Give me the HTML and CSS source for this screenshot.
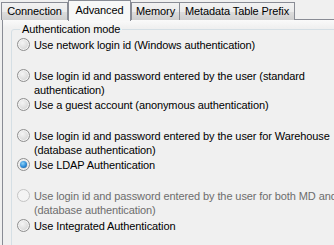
FILE: index.html
```html
<!DOCTYPE html>
<html>
<head>
<meta charset="utf-8">
<link rel="stylesheet" href="styles.css">
</head>
<body>
<div class="window">
  <div class="tabs">
    <div class="tab tab-conn">Connection</div>
    <div class="tab tab-adv active">Advanced</div>
    <div class="tab tab-mem">Memory</div>
    <div class="tab tab-meta">Metadata Table Prefix</div>
  </div>
  <div class="panel">
    <fieldset class="group">
      <legend>Authentication mode</legend>
      <div class="opt o1"><span class="radio"></span><span class="lbl">Use network login id (Windows authentication)</span></div>
      <div class="opt o2"><span class="radio"></span><span class="lbl">Use login id and password entered by the user (standard<br>authentication)</span></div>
      <div class="opt o3"><span class="radio"></span><span class="lbl">Use a guest account (anonymous authentication)</span></div>
      <div class="opt o4"><span class="radio"></span><span class="lbl">Use login id and password entered by the user for Warehouse<br>(database authentication)</span></div>
      <div class="opt o5"><span class="radio checked"></span><span class="lbl">Use LDAP Authentication</span></div>
      <div class="opt o6 disabled"><span class="radio"></span><span class="lbl">Use login id and password entered by the user for both MD and<br>(database authentication)</span></div>
      <div class="opt o7"><span class="radio"></span><span class="lbl">Use Integrated Authentication</span></div>
    </fieldset>
  </div>
</div>
</body>
</html>
```
FILE: styles.css
```css
html, body {
  margin: 0;
  padding: 0;
  background: #f0f0f0;
  overflow: hidden;
}
body {
  width: 334px;
  height: 245px;
  font-family: "Liberation Sans", Arial, sans-serif;
  font-size: 11px;
  letter-spacing: -0.1px;
  color: #000;
}
.window {
  width: 480px;
}
.tabs {
  display: flex;
  height: 20px;
  padding-left: 1px;
  position: relative;
  z-index: 1;
}
.tab {
  box-sizing: border-box;
  height: 18px;
  margin-top: 2px;
  margin-right: -1px;
  border: 1px solid #898c95;
  border-bottom: none;
  background: linear-gradient(#f2f2f2, #ebebeb 50%, #dddddd 51%, #cfcfcf);
  line-height: 16px;
  text-align: center;
  white-space: nowrap;
}
.tab-conn { width: 67px; }
.tab-adv { width: 63px; }
.tab-mem { width: 49px; }
.tab-meta { width: 116px; }
.tab.active {
  margin-top: 0;
  height: 21px;
  margin-left: 1px;
  margin-right: 0;
  background: #f7f7f7;
  line-height: 18px;
  z-index: 2;
}
.panel {
  border-top: 1px solid #898c95;
  border-left: 1px solid #898c95;
  margin-left: 2px;
  margin-top: -1px;
  height: 260px;
  background: linear-gradient(#fafafa, #f0f0f0 8px);
  padding: 3px 0 0 8px;
  box-sizing: border-box;
}
.group {
  margin: 0;
  border: 1px solid #d5dfe5;
  border-radius: 3px;
  padding: 3px 0 0 5px;
  height: 240px;
  box-sizing: border-box;
}
.group legend {
  padding: 0 2px;
  margin-left: 3px;
  line-height: 12px;
}
.opt {
  display: flex;
  align-items: flex-start;
  height: 30px;
  line-height: 14px;
}
.o1 { height: 31px; }
.o2 { height: 29px; }
.o3 { height: 31px; }
.o4 { height: 29px; }
.o5 { height: 31px; }
.o6 { height: 30px; }
.radio {
  flex: none;
  box-sizing: border-box;
  width: 13px;
  height: 13px;
  margin-right: 4px;
  border-radius: 50%;
  border: 1px solid #8f8f8f;
  background: radial-gradient(circle at 40% 35%, #f4f4f4 0, #e0e0e0 50%, #c8c8c8 100%);
  box-shadow: inset 0 0 0 1px #f4f4f4;
  position: relative;
}
.radio.checked::after {
  content: "";
  position: absolute;
  left: 2px;
  top: 2px;
  width: 7px;
  height: 7px;
  border-radius: 50%;
  background: radial-gradient(circle at 40% 35%, #8ed3f6 0, #2c8ad8 55%, #1c5180 100%);
}
.lbl {
  white-space: nowrap;
}
.disabled .lbl { color: #6d6d6d; }
.disabled .radio {
  border-color: #c4c4c4;
  background: #f4f4f4;
}
```
